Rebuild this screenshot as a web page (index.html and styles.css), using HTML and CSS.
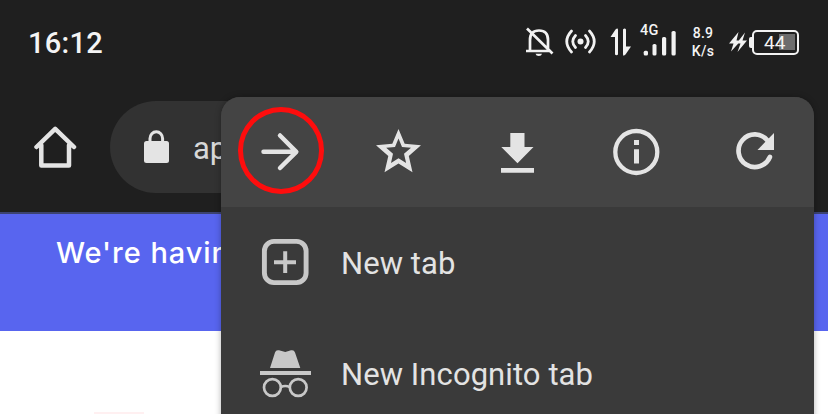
FILE: index.html
```html
<!DOCTYPE html>
<html lang="en">
<head>
<meta charset="utf-8">
<title>Browser menu</title>
<link rel="stylesheet" href="styles.css">
</head>
<body>
<div class="screen">
  <header class="status">
    <span class="clock">16:12</span>
    <div class="indicators">
      <svg class="bell" width="30" height="32" viewBox="525 25 30 32" fill="none" stroke="#f2f2f2" stroke-width="2.700">
        <path d="M530 49.500V39Q530 29.500 539 29.500T548 39V49.500M526 50H551M527 27.500L552.500 52.500"/>
        <path d="M535.500 52.700H542Q541.500 55 538.800 55T535.500 52.700Z" fill="#f2f2f2" stroke="none"/>
      </svg>
      <svg class="hotspot" width="32" height="30" viewBox="565 27 32 30" fill="none" stroke="#f2f2f2" stroke-width="2.700" stroke-linecap="round">
        <circle cx="580.500" cy="41.500" r="3" fill="#f2f2f2" stroke="none"/>
        <path d="M575.500 35.500Q570 41.500 575.500 47.500M585.500 35.500Q591 41.500 585.500 47.500M571.500 31Q562 41.500 571.500 52M589.500 31Q599 41.500 589.500 52"/>
      </svg>
      <svg class="data" width="24" height="30" viewBox="609 27 24 30" fill="#f2f2f2">
        <path d="M610.500 37L615.500 29.500Q618 27.500 618 30V54.500Q616.500 56 615 54.500V37ZM623 29.500Q624.700 27.500 626 29.500V46.500H631L625.500 54.500Q623 57 623 54Z"/>
      </svg>
      <div class="signal">
        <span class="network">4G</span>
        <svg width="38" height="32" viewBox="640 25 38 32" fill="#f2f2f2"><rect x="643.700" y="49.700" width="4.300" height="4.800" rx="1.500"/><rect x="652.500" y="43" width="4" height="11.500" rx="1.600"/><rect x="662" y="36" width="4.200" height="18.500" rx="1.600"/><rect x="671.500" y="30" width="4.200" height="24.500" rx="1.600"/></svg>
      </div>
      <div class="speed"><span>8.9</span><span>K/s</span></div>
      <svg class="bolt" width="20" height="24" viewBox="728 30 20 24" fill="#f2f2f2"><path d="M738.500 32L729 43.500H733.500L731 51.500L741 40.500H736.500ZM745 32.500L736.500 43.500H740.500L737.500 52L747 40.500H742.500Z"/></svg>
      <div class="battery"><span>44</span></div>
    </div>
  </header>
  <nav class="toolbar">
    <svg class="home" width="44" height="44" viewBox="34 125 44 44" fill="none" stroke="#e4e4e4" stroke-width="4.500" stroke-linecap="round" stroke-linejoin="round"><path d="M36.500 147L55.200 128.800L74 147M41.300 145V165.500H69V145"/></svg>
    <div class="address">
      <svg width="26" height="34" viewBox="143 130 26 34"><rect x="144" y="141" width="25" height="22" rx="2.500" fill="#e4e4e4"/><path d="M150 142V138.500A6.300 6.800 0 0 1 162.600 138.500V142" fill="none" stroke="#e4e4e4" stroke-width="3"/></svg>
      <span>app</span>
    </div>
  </nav>
  <main>
    <div class="banner">We're having</div>
    <div class="content"><div class="mark"></div></div>
  </main>
  <aside class="menu">
    <div class="actions">
      <svg viewBox="221 97 119 110" fill="none" stroke="#e4e4e4" stroke-width="4.500" stroke-linecap="round" stroke-linejoin="round"><path d="M263.500 151.800H296M280 135.500L296.300 151.800L280 168"/></svg>
      <svg viewBox="340 97 118 110" fill="#e4e4e4" fill-rule="evenodd"><path d="M398.500 129L404.700 143.800L421 145.300L408.800 156L412.500 172.300L398.500 163.500L384.500 172.300L388.300 156L376 145.300L392.300 143.800ZM398.500 138.500L395 147L386.200 147.800L393 153.800L391 163L398.500 158.300L406.100 163L404 153.800L411 147.800L402 147Z"/></svg>
      <svg viewBox="458 97 119 110" fill="#e4e4e4"><path d="M510.300 133H524.500V147H533.500L517.500 163.300L501.300 147H510.300ZM501 168H534V172.700H501Z"/></svg>
      <svg viewBox="577 97 118 110" fill="#e4e4e4"><circle cx="636.300" cy="152" r="21" fill="none" stroke="#e4e4e4" stroke-width="4.300"/><path d="M634 140H639V145H634ZM634 149.300H639V163.500H634Z"/></svg>
      <svg viewBox="695 97 119 110"><path d="M769.900 157A16.300 16.300 0 1 1 767.500 140.500" fill="none" stroke="#e4e4e4" stroke-width="4.700" stroke-linecap="round"/><path d="M774 133V150H757.500Z" fill="#e4e4e4"/></svg>
      <i class="ring"></i>
    </div>
    <div class="item">
      <svg width="52" height="52" viewBox="259 237 52 52" fill="none" stroke="#c8c8c8"><rect x="264.400" y="241.400" width="41.700" height="41.200" rx="9.500" stroke-width="4.900"/><path d="M274 262.200H296M285.200 251.300V273" stroke-width="4"/></svg>
      <span>New tab</span>
    </div>
    <div class="item">
      <svg width="52" height="52" viewBox="259 348 52 52" fill="#c8c8c8"><path d="M270 368L275 352.500Q276 349.500 279 350.300L285.300 352L291 350.300Q294 349.500 295 352.500L300.300 368ZM260 371H311V375H260Z"/><g fill="none" stroke="#c8c8c8" stroke-width="2.700"><circle cx="272.400" cy="387.500" r="8.400"/><circle cx="298.200" cy="387.500" r="8.400"/><path d="M280.800 387Q285.300 385 289.800 387"/></g></svg>
      <span>New Incognito tab</span>
    </div>
  </aside>
</div>
</body>
</html>
```

FILE: styles.css
```css
* { box-sizing: border-box; }
body { margin: 0; }
svg { display: block; flex: none; }
.screen {
  position: relative;
  width: 828px;
  height: 414px;
  overflow: hidden;
  background: #1f1f1f;
  font-family: Roboto, "Liberation Sans", sans-serif;
}
.status {
  height: 84px;
  padding: 0 29px 0 28px;
  display: flex;
  align-items: center;
  justify-content: space-between;
  color: #f4f4f4;
}
.clock { padding-top: 1px; font-size: 29px; font-weight: 500; letter-spacing: 0.3px; }
.indicators { display: flex; align-items: center; }
.hotspot { margin-left: 10px; }
.data { margin-left: 12px; }
.signal { position: relative; margin-left: 7px; }
.network { position: absolute; left: 0; top: -3px; font-size: 14.500px; line-height: 16px; font-weight: 500; letter-spacing: 0.3px; }
.speed {
  width: 26px;
  margin-left: 12px;
  padding-top: 1px;
  display: flex;
  flex-direction: column;
  align-items: center;
  font-size: 14px;
  line-height: 17.5px;
  font-weight: 500;
  letter-spacing: 0.3px;
}
.bolt { margin-left: 12px; }
.battery {
  position: relative;
  width: 47px;
  height: 25px;
  margin-left: 4px;
  padding-left: 10px;
  display: flex;
  align-items: center;
  border: 2px solid #f2f2f2;
  border-radius: 5px;
  background: linear-gradient(#6c6c6c, #6c6c6c) 25px 2.5px / 16px 16px no-repeat;
  font-size: 19px;
}
.battery::before {
  content: "";
  position: absolute;
  left: -5px;
  top: 5px;
  width: 3px;
  height: 11px;
  border-radius: 2px 0 0 2px;
  background: #f2f2f2;
}
.toolbar {
  height: 128px;
  padding: 17px 0 0 34px;
  display: flex;
  align-items: flex-start;
}
.home { margin-top: 24px; }
.address {
  width: 400px;
  height: 92px;
  margin-left: 32px;
  padding-left: 33px;
  display: flex;
  align-items: center;
  border-radius: 46px;
  background: #323232;
  color: #d8d8d8;
  font-size: 31px;
}
.address span { margin-left: 24px; padding-top: 3px; }
.banner {
  height: 119px;
  padding: 20px 0 0 56px;
  border-top: 2px solid #3c4372;
  background: #5865ef;
  color: #fff;
  font-family: Inter, "Open Sans", sans-serif;
  font-size: 29px;
  line-height: 37px;
  font-weight: 500;
  letter-spacing: 0.95px;
}
.content { height: 83px; padding: 81px 0 0 94px; background: #fff; }
.mark { width: 50px; height: 2px; background: #fff0f1; }
.menu {
  position: absolute;
  left: 221px;
  top: 97px;
  width: 593px;
  height: 340px;
  overflow: hidden;
  border-radius: 19px;
  background: #3a3a3a;
  box-shadow: 0 0 6px rgba(0, 0, 0, 0.3);
}
.actions {
  position: relative;
  height: 110px;
  display: grid;
  grid-template-columns: 119px 118px 119px 118px 119px;
  background: #444;
}
.ring {
  position: absolute;
  left: 16.500px;
  top: 10px;
  width: 86px;
  height: 86.500px;
  border: 5px solid #fe0d0d;
  border-radius: 50%;
}
.item {
  height: 111px;
  padding-left: 38px;
  display: flex;
  align-items: center;
  gap: 30px;
  color: #e3e3e3;
  font-size: 31px;
  letter-spacing: 0.08px;
}
.item span { padding-top: 2px; }
```
